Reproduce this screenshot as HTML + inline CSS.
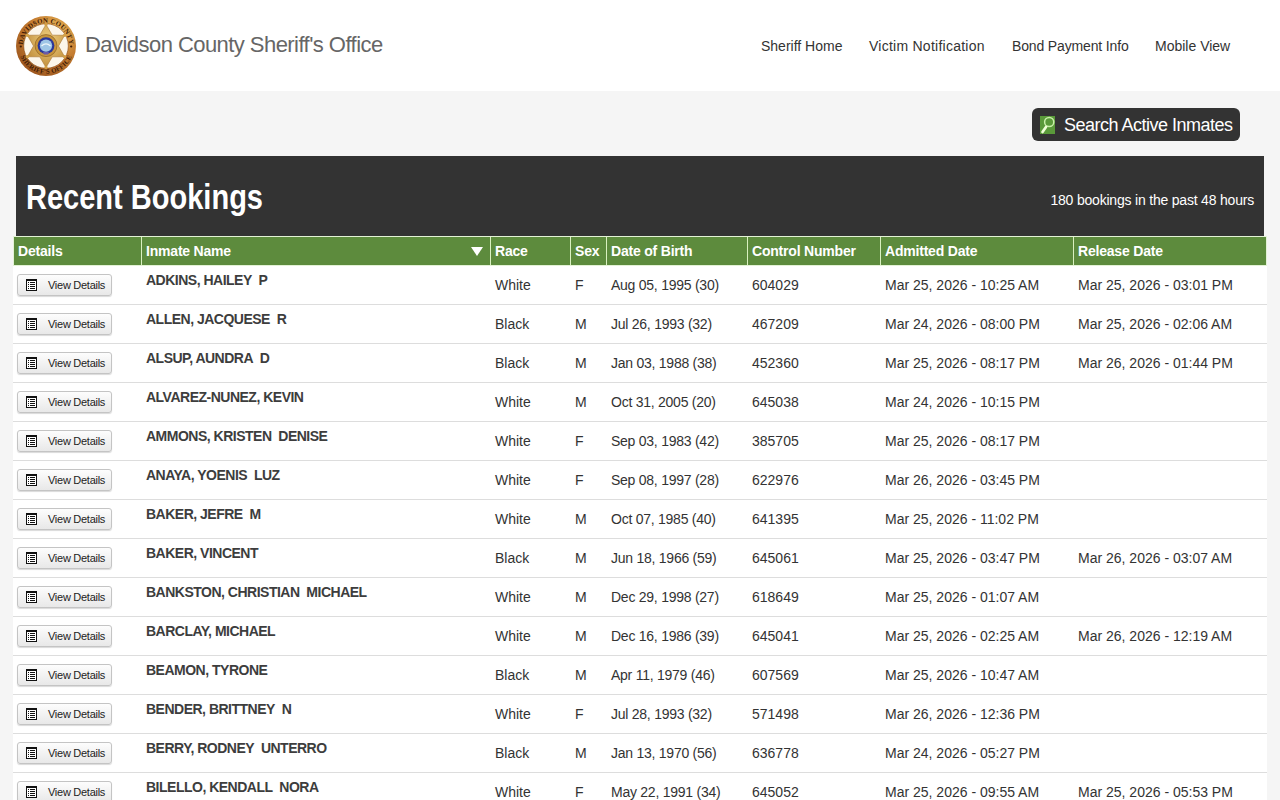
<!DOCTYPE html>
<html><head><meta charset="utf-8"><title>Recent Bookings</title>
<style>
*{box-sizing:border-box;margin:0;padding:0}
html,body{width:1280px;height:800px;overflow:hidden}
body{background:#f5f5f5;font-family:"Liberation Sans",sans-serif;color:#333;position:relative}
#hdr{position:absolute;left:0;top:0;width:1280px;height:91px;background:#fff}
#badge{position:absolute;left:16px;top:16px;width:60px;height:60px}
#title{position:absolute;left:85px;top:32px;font-size:22px;line-height:26px;color:#666;letter-spacing:-0.55px;white-space:nowrap}
.nav{position:absolute;top:38px;font-size:14px;line-height:17px;color:#333;white-space:nowrap}
#search{position:absolute;left:1032px;top:108px;width:208px;height:33px;background:#333;border-radius:6px}
#search .ic{position:absolute;left:8px;top:8px}
#search .t{position:absolute;left:32px;top:7px;font-size:18px;line-height:21px;color:#fff;letter-spacing:-0.5px;white-space:nowrap}
#panel{position:absolute;left:16px;top:156px;width:1248px;height:80px;background:#333}
#panel h1{position:absolute;left:10px;top:22px;font-size:35px;line-height:38px;font-weight:bold;color:#fff;white-space:nowrap;transform-origin:0 0;transform:scaleX(0.829)}
#panel .cnt{position:absolute;right:10px;top:36px;font-size:14px;line-height:17px;color:#fff;white-space:nowrap;letter-spacing:-0.2px}
#thead{position:absolute;left:13px;top:236px;width:1254px;height:30px;background:#5d8b3d;border:1px solid #e3f2d6}
.th{position:absolute;top:6px;font-size:14px;line-height:17px;font-weight:bold;color:#fff;white-space:nowrap;letter-spacing:-0.2px}
.vl{position:absolute;top:0;width:1px;height:28px;background:#d9f0c0}
#tbody{position:absolute;left:13px;top:266px;width:1254px;height:534px;background:#fff}
.row{position:absolute;left:0;width:1254px;height:39px;border-bottom:1px solid #ddd}
.td{position:absolute;top:11px;font-size:14px;line-height:17px;color:#333;white-space:nowrap}
.nm{position:absolute;top:6px;font-size:14px;line-height:17px;font-weight:bold;color:#3d3d3d;white-space:nowrap;letter-spacing:-0.5px}
.btn{position:absolute;left:4px;top:8px;width:95px;height:22px;border:1px solid #c4c4c4;border-radius:3px;background:linear-gradient(#fdfdfd,#e8e8e8);box-shadow:0 1px 1px rgba(0,0,0,0.15)}
.btn .ic{position:absolute;left:8px;top:4px;display:block}
.btn .t{position:absolute;left:30px;top:4px;font-size:11px;line-height:13px;color:#222;white-space:nowrap;letter-spacing:-0.27px}
</style></head><body>
<div id="hdr">
<svg id="badge" viewBox="0 0 60 60"><defs><radialGradient id="rg" cx="65%" cy="30%" r="80%"><stop offset="0" stop-color="#eec060"/><stop offset="0.55" stop-color="#c47c30"/><stop offset="1" stop-color="#98521c"/></radialGradient><radialGradient id="sg" cx="55%" cy="35%" r="65%"><stop offset="0" stop-color="#f0d080"/><stop offset="1" stop-color="#c2903e"/></radialGradient><path id="tp" d="M6.8,30 A23.2,23.2 0 0 1 53.2,30"/><path id="bp" d="M2.2,30 A27.8,27.8 0 0 0 57.8,30"/></defs><circle cx="30" cy="30" r="30" fill="url(#rg)"/><circle cx="30" cy="30" r="22.3" fill="#fcf6ea" stroke="#8a4a18" stroke-width="0.6"/><text font-family="Liberation Serif" font-weight="bold" font-size="6.8" fill="#3e1a06" letter-spacing="0.2"><textPath href="#tp" startOffset="50%" text-anchor="middle">DAVIDSON COUNTY</textPath></text><text font-family="Liberation Serif" font-weight="bold" font-size="6.8" fill="#3e1a06" letter-spacing="0.2"><textPath href="#bp" startOffset="50%" text-anchor="middle">SHERIFF'S OFFICE</textPath></text><circle cx="4.8" cy="30.5" r="1.1" fill="#3e1a06"/><circle cx="55.2" cy="30.5" r="1.1" fill="#3e1a06"/><polygon points="30.00,8.50 36.25,19.17 48.62,19.25 42.50,30.00 48.62,40.75 36.25,40.83 30.00,51.50 23.75,40.83 11.38,40.75 17.50,30.00 11.38,19.25 23.75,19.17" fill="url(#sg)" stroke="#a87430" stroke-width="0.6"/><circle cx="30.00" cy="8.50" r="1.7" fill="#d2a048"/><circle cx="48.62" cy="19.25" r="1.7" fill="#d2a048"/><circle cx="48.62" cy="40.75" r="1.7" fill="#d2a048"/><circle cx="30.00" cy="51.50" r="1.7" fill="#d2a048"/><circle cx="11.38" cy="40.75" r="1.7" fill="#d2a048"/><circle cx="11.38" cy="19.25" r="1.7" fill="#d2a048"/><circle cx="30" cy="29.6" r="11" fill="#c8953c" stroke="#8c6224" stroke-width="0.7"/><circle cx="30" cy="29.6" r="8.4" fill="#2a379a"/><circle cx="30" cy="29.6" r="6.2" fill="#9fc6e6"/><path d="M25.5,30 Q30,25.5 34.5,30" stroke="#eef6fb" stroke-width="1.2" fill="none"/><path d="M27,36 L33,36 L32,38.5 L28,38.5Z" fill="#6a5aa8"/></svg>
<div id="title">Davidson County Sheriff's Office</div>
<div class="nav" style="left:761px">Sheriff Home</div>
<div class="nav" style="left:869px;letter-spacing:0.25px">Victim Notification</div>
<div class="nav" style="left:1012px;letter-spacing:-0.15px">Bond Payment Info</div>
<div class="nav" style="left:1155px">Mobile View</div>
</div>
<div id="search"><svg class="ic" width="15" height="18" viewBox="0 0 15 18"><rect x="0" y="0" width="15" height="18" fill="#5a9a3a"/><circle cx="9.2" cy="6" r="4.6" fill="none" stroke="#c8f0a8" stroke-width="1.5"/><line x1="2.5" y1="16" x2="6" y2="11" stroke="#f0ffd8" stroke-width="2.7" stroke-linecap="round"/></svg><div class="t">Search Active Inmates</div></div>
<div id="panel"><h1>Recent Bookings</h1><div class="cnt">180 bookings in the past 48 hours</div></div>
<div id="thead">
<div class="th" style="left:4px">Details</div>
<div class="vl" style="left:127px"></div>
<div class="th" style="left:132px">Inmate Name</div>
<div class="vl" style="left:476px"></div>
<div class="th" style="left:481px">Race</div>
<div class="vl" style="left:556px"></div>
<div class="th" style="left:561px">Sex</div>
<div class="vl" style="left:592px"></div>
<div class="th" style="left:597px">Date of Birth</div>
<div class="vl" style="left:733px"></div>
<div class="th" style="left:738px">Control Number</div>
<div class="vl" style="left:866px"></div>
<div class="th" style="left:871px">Admitted Date</div>
<div class="vl" style="left:1059px"></div>
<div class="th" style="left:1064px">Release Date</div>
<svg style="position:absolute;left:457px;top:10px" width="12" height="9" viewBox="0 0 12 9"><polygon points="0,0 12,0 6,9" fill="#fff"/></svg>
</div>
<div id="tbody">
<div class="row" style="top:0px">
<div class="btn"><svg class="ic" width="11" height="12" viewBox="0 0 11 12" shape-rendering="crispEdges"><rect x="0.5" y="0.5" width="10" height="11" fill="#fff" stroke="#111" stroke-width="1"/><rect x="0" y="0" width="11" height="2" fill="#111"/><path d="M2 3h1v1h-1zM4 3h5v1h-5zM2 5h1v1h-1zM4 5h5v1h-5zM2 7h1v1h-1zM4 7h5v1h-5zM2 9h1v1h-1zM4 9h5v1h-5z" fill="#111"/></svg><span class="t">View Details</span></div>
<div class="nm" style="left:133px">ADKINS, HAILEY&nbsp; P</div>
<div class="td" style="left:482px">White</div>
<div class="td" style="left:562px">F</div>
<div class="td" style="left:598px;letter-spacing:-0.25px">Aug 05, 1995 (30)</div>
<div class="td" style="left:739px">604029</div>
<div class="td" style="left:872px">Mar 25, 2026 - 10:25 AM</div>
<div class="td" style="left:1065px">Mar 25, 2026 - 03:01 PM</div>
</div>
<div class="row" style="top:39px">
<div class="btn"><svg class="ic" width="11" height="12" viewBox="0 0 11 12" shape-rendering="crispEdges"><rect x="0.5" y="0.5" width="10" height="11" fill="#fff" stroke="#111" stroke-width="1"/><rect x="0" y="0" width="11" height="2" fill="#111"/><path d="M2 3h1v1h-1zM4 3h5v1h-5zM2 5h1v1h-1zM4 5h5v1h-5zM2 7h1v1h-1zM4 7h5v1h-5zM2 9h1v1h-1zM4 9h5v1h-5z" fill="#111"/></svg><span class="t">View Details</span></div>
<div class="nm" style="left:133px">ALLEN, JACQUESE&nbsp; R</div>
<div class="td" style="left:482px">Black</div>
<div class="td" style="left:562px">M</div>
<div class="td" style="left:598px;letter-spacing:-0.25px">Jul 26, 1993 (32)</div>
<div class="td" style="left:739px">467209</div>
<div class="td" style="left:872px">Mar 24, 2026 - 08:00 PM</div>
<div class="td" style="left:1065px">Mar 25, 2026 - 02:06 AM</div>
</div>
<div class="row" style="top:78px">
<div class="btn"><svg class="ic" width="11" height="12" viewBox="0 0 11 12" shape-rendering="crispEdges"><rect x="0.5" y="0.5" width="10" height="11" fill="#fff" stroke="#111" stroke-width="1"/><rect x="0" y="0" width="11" height="2" fill="#111"/><path d="M2 3h1v1h-1zM4 3h5v1h-5zM2 5h1v1h-1zM4 5h5v1h-5zM2 7h1v1h-1zM4 7h5v1h-5zM2 9h1v1h-1zM4 9h5v1h-5z" fill="#111"/></svg><span class="t">View Details</span></div>
<div class="nm" style="left:133px">ALSUP, AUNDRA&nbsp; D</div>
<div class="td" style="left:482px">Black</div>
<div class="td" style="left:562px">M</div>
<div class="td" style="left:598px;letter-spacing:-0.25px">Jan 03, 1988 (38)</div>
<div class="td" style="left:739px">452360</div>
<div class="td" style="left:872px">Mar 25, 2026 - 08:17 PM</div>
<div class="td" style="left:1065px">Mar 26, 2026 - 01:44 PM</div>
</div>
<div class="row" style="top:117px">
<div class="btn"><svg class="ic" width="11" height="12" viewBox="0 0 11 12" shape-rendering="crispEdges"><rect x="0.5" y="0.5" width="10" height="11" fill="#fff" stroke="#111" stroke-width="1"/><rect x="0" y="0" width="11" height="2" fill="#111"/><path d="M2 3h1v1h-1zM4 3h5v1h-5zM2 5h1v1h-1zM4 5h5v1h-5zM2 7h1v1h-1zM4 7h5v1h-5zM2 9h1v1h-1zM4 9h5v1h-5z" fill="#111"/></svg><span class="t">View Details</span></div>
<div class="nm" style="left:133px">ALVAREZ-NUNEZ, KEVIN</div>
<div class="td" style="left:482px">White</div>
<div class="td" style="left:562px">M</div>
<div class="td" style="left:598px;letter-spacing:-0.25px">Oct 31, 2005 (20)</div>
<div class="td" style="left:739px">645038</div>
<div class="td" style="left:872px">Mar 24, 2026 - 10:15 PM</div>
</div>
<div class="row" style="top:156px">
<div class="btn"><svg class="ic" width="11" height="12" viewBox="0 0 11 12" shape-rendering="crispEdges"><rect x="0.5" y="0.5" width="10" height="11" fill="#fff" stroke="#111" stroke-width="1"/><rect x="0" y="0" width="11" height="2" fill="#111"/><path d="M2 3h1v1h-1zM4 3h5v1h-5zM2 5h1v1h-1zM4 5h5v1h-5zM2 7h1v1h-1zM4 7h5v1h-5zM2 9h1v1h-1zM4 9h5v1h-5z" fill="#111"/></svg><span class="t">View Details</span></div>
<div class="nm" style="left:133px">AMMONS, KRISTEN&nbsp; DENISE</div>
<div class="td" style="left:482px">White</div>
<div class="td" style="left:562px">F</div>
<div class="td" style="left:598px;letter-spacing:-0.25px">Sep 03, 1983 (42)</div>
<div class="td" style="left:739px">385705</div>
<div class="td" style="left:872px">Mar 25, 2026 - 08:17 PM</div>
</div>
<div class="row" style="top:195px">
<div class="btn"><svg class="ic" width="11" height="12" viewBox="0 0 11 12" shape-rendering="crispEdges"><rect x="0.5" y="0.5" width="10" height="11" fill="#fff" stroke="#111" stroke-width="1"/><rect x="0" y="0" width="11" height="2" fill="#111"/><path d="M2 3h1v1h-1zM4 3h5v1h-5zM2 5h1v1h-1zM4 5h5v1h-5zM2 7h1v1h-1zM4 7h5v1h-5zM2 9h1v1h-1zM4 9h5v1h-5z" fill="#111"/></svg><span class="t">View Details</span></div>
<div class="nm" style="left:133px">ANAYA, YOENIS&nbsp; LUZ</div>
<div class="td" style="left:482px">White</div>
<div class="td" style="left:562px">F</div>
<div class="td" style="left:598px;letter-spacing:-0.25px">Sep 08, 1997 (28)</div>
<div class="td" style="left:739px">622976</div>
<div class="td" style="left:872px">Mar 26, 2026 - 03:45 PM</div>
</div>
<div class="row" style="top:234px">
<div class="btn"><svg class="ic" width="11" height="12" viewBox="0 0 11 12" shape-rendering="crispEdges"><rect x="0.5" y="0.5" width="10" height="11" fill="#fff" stroke="#111" stroke-width="1"/><rect x="0" y="0" width="11" height="2" fill="#111"/><path d="M2 3h1v1h-1zM4 3h5v1h-5zM2 5h1v1h-1zM4 5h5v1h-5zM2 7h1v1h-1zM4 7h5v1h-5zM2 9h1v1h-1zM4 9h5v1h-5z" fill="#111"/></svg><span class="t">View Details</span></div>
<div class="nm" style="left:133px">BAKER, JEFRE&nbsp; M</div>
<div class="td" style="left:482px">White</div>
<div class="td" style="left:562px">M</div>
<div class="td" style="left:598px;letter-spacing:-0.25px">Oct 07, 1985 (40)</div>
<div class="td" style="left:739px">641395</div>
<div class="td" style="left:872px">Mar 25, 2026 - 11:02 PM</div>
</div>
<div class="row" style="top:273px">
<div class="btn"><svg class="ic" width="11" height="12" viewBox="0 0 11 12" shape-rendering="crispEdges"><rect x="0.5" y="0.5" width="10" height="11" fill="#fff" stroke="#111" stroke-width="1"/><rect x="0" y="0" width="11" height="2" fill="#111"/><path d="M2 3h1v1h-1zM4 3h5v1h-5zM2 5h1v1h-1zM4 5h5v1h-5zM2 7h1v1h-1zM4 7h5v1h-5zM2 9h1v1h-1zM4 9h5v1h-5z" fill="#111"/></svg><span class="t">View Details</span></div>
<div class="nm" style="left:133px">BAKER, VINCENT</div>
<div class="td" style="left:482px">Black</div>
<div class="td" style="left:562px">M</div>
<div class="td" style="left:598px;letter-spacing:-0.25px">Jun 18, 1966 (59)</div>
<div class="td" style="left:739px">645061</div>
<div class="td" style="left:872px">Mar 25, 2026 - 03:47 PM</div>
<div class="td" style="left:1065px">Mar 26, 2026 - 03:07 AM</div>
</div>
<div class="row" style="top:312px">
<div class="btn"><svg class="ic" width="11" height="12" viewBox="0 0 11 12" shape-rendering="crispEdges"><rect x="0.5" y="0.5" width="10" height="11" fill="#fff" stroke="#111" stroke-width="1"/><rect x="0" y="0" width="11" height="2" fill="#111"/><path d="M2 3h1v1h-1zM4 3h5v1h-5zM2 5h1v1h-1zM4 5h5v1h-5zM2 7h1v1h-1zM4 7h5v1h-5zM2 9h1v1h-1zM4 9h5v1h-5z" fill="#111"/></svg><span class="t">View Details</span></div>
<div class="nm" style="left:133px">BANKSTON, CHRISTIAN&nbsp; MICHAEL</div>
<div class="td" style="left:482px">White</div>
<div class="td" style="left:562px">M</div>
<div class="td" style="left:598px;letter-spacing:-0.25px">Dec 29, 1998 (27)</div>
<div class="td" style="left:739px">618649</div>
<div class="td" style="left:872px">Mar 25, 2026 - 01:07 AM</div>
</div>
<div class="row" style="top:351px">
<div class="btn"><svg class="ic" width="11" height="12" viewBox="0 0 11 12" shape-rendering="crispEdges"><rect x="0.5" y="0.5" width="10" height="11" fill="#fff" stroke="#111" stroke-width="1"/><rect x="0" y="0" width="11" height="2" fill="#111"/><path d="M2 3h1v1h-1zM4 3h5v1h-5zM2 5h1v1h-1zM4 5h5v1h-5zM2 7h1v1h-1zM4 7h5v1h-5zM2 9h1v1h-1zM4 9h5v1h-5z" fill="#111"/></svg><span class="t">View Details</span></div>
<div class="nm" style="left:133px">BARCLAY, MICHAEL</div>
<div class="td" style="left:482px">White</div>
<div class="td" style="left:562px">M</div>
<div class="td" style="left:598px;letter-spacing:-0.25px">Dec 16, 1986 (39)</div>
<div class="td" style="left:739px">645041</div>
<div class="td" style="left:872px">Mar 25, 2026 - 02:25 AM</div>
<div class="td" style="left:1065px">Mar 26, 2026 - 12:19 AM</div>
</div>
<div class="row" style="top:390px">
<div class="btn"><svg class="ic" width="11" height="12" viewBox="0 0 11 12" shape-rendering="crispEdges"><rect x="0.5" y="0.5" width="10" height="11" fill="#fff" stroke="#111" stroke-width="1"/><rect x="0" y="0" width="11" height="2" fill="#111"/><path d="M2 3h1v1h-1zM4 3h5v1h-5zM2 5h1v1h-1zM4 5h5v1h-5zM2 7h1v1h-1zM4 7h5v1h-5zM2 9h1v1h-1zM4 9h5v1h-5z" fill="#111"/></svg><span class="t">View Details</span></div>
<div class="nm" style="left:133px">BEAMON, TYRONE</div>
<div class="td" style="left:482px">Black</div>
<div class="td" style="left:562px">M</div>
<div class="td" style="left:598px;letter-spacing:-0.25px">Apr 11, 1979 (46)</div>
<div class="td" style="left:739px">607569</div>
<div class="td" style="left:872px">Mar 25, 2026 - 10:47 AM</div>
</div>
<div class="row" style="top:429px">
<div class="btn"><svg class="ic" width="11" height="12" viewBox="0 0 11 12" shape-rendering="crispEdges"><rect x="0.5" y="0.5" width="10" height="11" fill="#fff" stroke="#111" stroke-width="1"/><rect x="0" y="0" width="11" height="2" fill="#111"/><path d="M2 3h1v1h-1zM4 3h5v1h-5zM2 5h1v1h-1zM4 5h5v1h-5zM2 7h1v1h-1zM4 7h5v1h-5zM2 9h1v1h-1zM4 9h5v1h-5z" fill="#111"/></svg><span class="t">View Details</span></div>
<div class="nm" style="left:133px">BENDER, BRITTNEY&nbsp; N</div>
<div class="td" style="left:482px">White</div>
<div class="td" style="left:562px">F</div>
<div class="td" style="left:598px;letter-spacing:-0.25px">Jul 28, 1993 (32)</div>
<div class="td" style="left:739px">571498</div>
<div class="td" style="left:872px">Mar 26, 2026 - 12:36 PM</div>
</div>
<div class="row" style="top:468px">
<div class="btn"><svg class="ic" width="11" height="12" viewBox="0 0 11 12" shape-rendering="crispEdges"><rect x="0.5" y="0.5" width="10" height="11" fill="#fff" stroke="#111" stroke-width="1"/><rect x="0" y="0" width="11" height="2" fill="#111"/><path d="M2 3h1v1h-1zM4 3h5v1h-5zM2 5h1v1h-1zM4 5h5v1h-5zM2 7h1v1h-1zM4 7h5v1h-5zM2 9h1v1h-1zM4 9h5v1h-5z" fill="#111"/></svg><span class="t">View Details</span></div>
<div class="nm" style="left:133px">BERRY, RODNEY&nbsp; UNTERRO</div>
<div class="td" style="left:482px">Black</div>
<div class="td" style="left:562px">M</div>
<div class="td" style="left:598px;letter-spacing:-0.25px">Jan 13, 1970 (56)</div>
<div class="td" style="left:739px">636778</div>
<div class="td" style="left:872px">Mar 24, 2026 - 05:27 PM</div>
</div>
<div class="row" style="top:507px">
<div class="btn"><svg class="ic" width="11" height="12" viewBox="0 0 11 12" shape-rendering="crispEdges"><rect x="0.5" y="0.5" width="10" height="11" fill="#fff" stroke="#111" stroke-width="1"/><rect x="0" y="0" width="11" height="2" fill="#111"/><path d="M2 3h1v1h-1zM4 3h5v1h-5zM2 5h1v1h-1zM4 5h5v1h-5zM2 7h1v1h-1zM4 7h5v1h-5zM2 9h1v1h-1zM4 9h5v1h-5z" fill="#111"/></svg><span class="t">View Details</span></div>
<div class="nm" style="left:133px">BILELLO, KENDALL&nbsp; NORA</div>
<div class="td" style="left:482px">White</div>
<div class="td" style="left:562px">F</div>
<div class="td" style="left:598px;letter-spacing:-0.25px">May 22, 1991 (34)</div>
<div class="td" style="left:739px">645052</div>
<div class="td" style="left:872px">Mar 25, 2026 - 09:55 AM</div>
<div class="td" style="left:1065px">Mar 25, 2026 - 05:53 PM</div>
</div>
</div>
</body></html>
